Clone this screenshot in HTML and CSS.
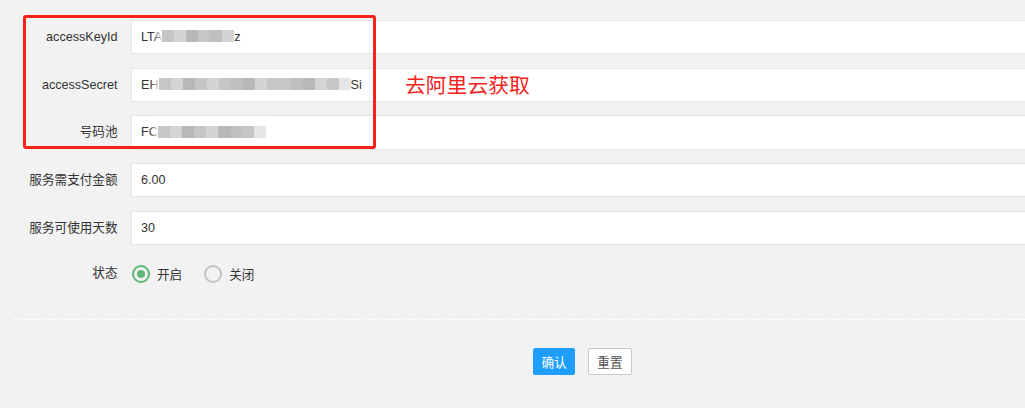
FILE: index.html
```html
<!DOCTYPE html>
<html lang="zh-CN">
<head>
    <meta charset="UTF-8">
    <meta name="viewport" content="width=device-width, initial-scale=1.0">
    <title>短信配置</title>
    <link rel="stylesheet" href="styles.css">
</head>
<body>
    <div class="page">
        <form class="form">
            <div class="form-item">
                <label class="label">accessKeyId</label>
                <div class="input">LTA<span class="mosaic">
                    <i class="c2"></i><i class="c3"></i><i class="c1"></i><i class="c2"></i><i class="c4"></i><i class="c3"></i>
                </span>z</div>
            </div>
            <div class="form-item">
                <label class="label">accessSecret</label>
                <div class="input">EH<span class="mosaic">
                    <i class="c2"></i><i class="c3"></i><i class="c1"></i><i class="c2"></i><i class="c3"></i><i class="c2"></i><i class="c4"></i><i class="c1"></i><i class="c3"></i><i class="c2"></i><i class="c2"></i><i class="c4"></i><i class="c1"></i><i class="c3"></i><i class="c2"></i><i class="c5"></i>
                </span>Si</div>
            </div>
            <div class="form-item">
                <label class="label">号码池</label>
                <div class="input">FC<span class="mosaic">
                    <i class="c2"></i><i class="c3"></i><i class="c1"></i><i class="c2"></i><i class="c3"></i><i class="c1"></i><i class="c4"></i><i class="c2"></i><i class="c5"></i>
                </span></div>
            </div>
            <div class="form-item">
                <label class="label">服务需支付金额</label>
                <div class="input">6.00</div>
            </div>
            <div class="form-item">
                <label class="label">服务可使用天数</label>
                <div class="input">30</div>
            </div>
            <div class="form-item radio-row">
                <label class="label">状态</label>
                <div class="radios">
                    <span class="radio checked"><i></i>开启</span>
                    <span class="radio"><i></i>关闭</span>
                </div>
            </div>
            <div class="form-footer">
                <button type="button" class="btn">确认</button>
                <button type="button" class="btn btn-plain">重置</button>
            </div>
        </form>

        <!-- 标注 -->
        <div class="mark-box"></div>
        <div class="mark-text">去阿里云获取</div>
    </div>
</body>
</html>
```

FILE: styles.css
```css
body {
    margin: 0;
    background: #f2f2f2;
    font-family: "Liberation Sans", Arial, "Noto Sans CJK SC", sans-serif;
    font-size: 12.6px;
    color: #333;
    overflow: hidden;
}

.page {
    position: relative;
    height: 408px;
}

.form {
    padding-top: 20px;
}

.form-item {
    display: flex;
    height: 34.2px;
    margin-bottom: 13.5px;
}

.form-item.radio-row {
    margin-top: -2px;
}

.label {
    width: 131px;
    flex-shrink: 0;
    box-sizing: border-box;
    padding-right: 13.5px;
    text-align: right;
    line-height: 34.2px;
    color: #333;
}

.input {
    flex: 1;
    margin-right: -10px;
    box-sizing: border-box;
    height: 34.2px;
    line-height: 32px;
    padding-left: 9px;
    background: #fff;
    border: 1px solid #e6e6e6;
    color: #333;
    white-space: nowrap;
}

.mosaic {
    display: inline-flex;
    vertical-align: middle;
    margin-top: -3px;
    padding: 3px 0;
    box-shadow: 0 0 6px 4px rgba(255, 255, 255, 0.9);
    background: rgba(255, 255, 255, 0.8);
}

.mosaic i {
    display: block;
    width: 12px;
    height: 12px;
}

.c1 { background: #b8b8b8; }
.c2 { background: #c6c6c6; }
.c3 { background: #d4d4d4; }
.c4 { background: #bfbfbf; }
.c5 { background: #e6e6e6; }

.radios {
    display: flex;
    align-items: center;
    padding-left: 1px;
}

.radio {
    display: flex;
    align-items: center;
    margin-right: 22px;
    color: #333;
}

.radio i {
    width: 18px;
    height: 18px;
    box-sizing: border-box;
    border: 2px solid #c2c2c2;
    border-radius: 50%;
    margin-right: 7px;
    position: relative;
}

.radio.checked i {
    border-color: #5fb878;
}

.radio.checked i::after {
    content: "";
    position: absolute;
    left: 3px;
    top: 3px;
    width: 8px;
    height: 8px;
    border-radius: 50%;
    background: #5fb878;
}

.form-footer {
    margin-left: 13px;
    margin-top: 28px;
    border-top: 1px dashed #fff;
    padding-top: 28px;
    padding-left: 520px;
    display: flex;
    gap: 13px;
}

.btn {
    height: 27px;
    padding: 0 7.4px;
    border: 1px solid #1e9fff;
    border-radius: 2px;
    background: #1e9fff;
    color: #fff;
    font-family: inherit;
    font-size: 12.6px;
    cursor: pointer;
}

.btn-plain {
    background: #fff;
    border-color: #c9c9c9;
    color: #555;
    padding: 0 8.4px;
}

.mark-box {
    position: absolute;
    left: 23px;
    top: 15px;
    width: 353px;
    height: 134px;
    box-sizing: border-box;
    border: 3px solid #f3221b;
    border-radius: 3px;
}

.mark-text {
    position: absolute;
    left: 405px;
    top: 72px;
    font-family: "Noto Sans CJK SC", sans-serif;
    font-size: 20.8px;
    line-height: 1.2;
    color: #f3221b;
}
```
